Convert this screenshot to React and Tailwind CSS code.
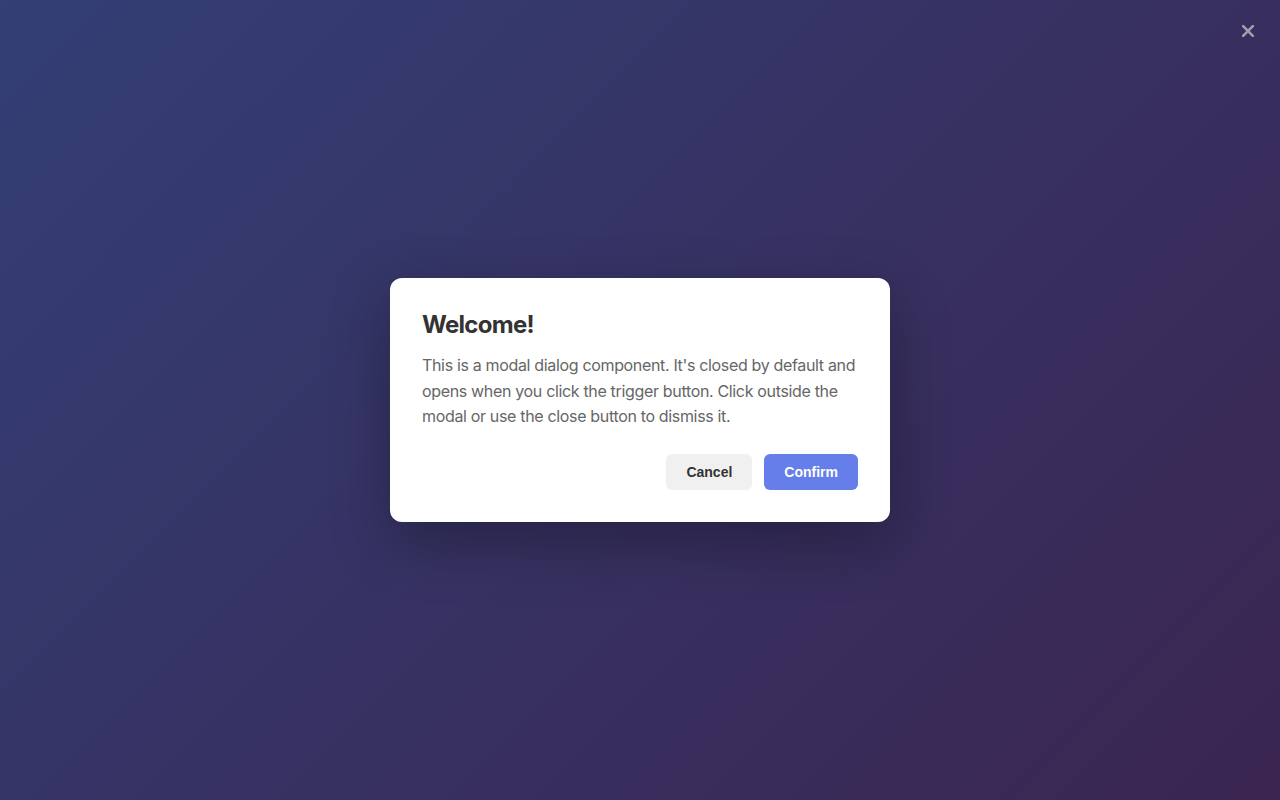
import React, { useState } from 'react';

const Modal = ({ onClose }) => {
  return (
    <div className="w-[500px] rounded-xl bg-white p-8 shadow-[0_20px_60px_rgba(0,0,0,0.3)]">
      <h2 className="mb-[14px] text-2xl leading-[29px] font-bold tracking-[-0.03em] text-[#333]">Welcome!</h2>
      <p className="mb-6 text-base leading-[1.6] tracking-[-0.021em] text-[#666]">
        This is a modal dialog component. It's closed by default and opens when you click the trigger
        button. Click outside the modal or use the close button to dismiss it.
      </p>
      <div className="flex justify-end gap-3">
        <button
          onClick={onClose}
          className="rounded-md bg-[#f0f0f0] px-5 py-[10px] text-sm leading-4 font-bold text-[#333] [font-family:'Liberation_Sans',Arial,sans-serif]"
        >
          Cancel
        </button>
        <button
          onClick={onClose}
          className="rounded-md bg-[#667eea] px-5 py-[10px] text-sm leading-4 font-bold text-white [font-family:'Liberation_Sans',Arial,sans-serif]"
        >
          Confirm
        </button>
      </div>
    </div>
  );
};

const App = () => {
  const [open, setOpen] = useState(true);

  return (
    <div className="relative min-h-screen bg-[linear-gradient(135deg,#667eea_0%,#764ba2_100%)] [font-family:Inter,'Noto_Sans',sans-serif]">
      <div className="flex min-h-screen items-center justify-center bg-black/50">
        {open ? (
          <Modal onClose={() => setOpen(false)} />
        ) : (
          <button
            onClick={() => setOpen(true)}
            className="rounded-md bg-white px-5 py-3 font-semibold text-[#667eea]"
          >
            Open Modal
          </button>
        )}
      </div>
      {open && (
        <button
          onClick={() => setOpen(false)}
          className="absolute top-[19px] right-[20px] flex h-6 w-6 items-center justify-center text-[#a0a0aa]"
          aria-label="Close"
        >
          <svg width="12" height="12" viewBox="0 0 12 12" fill="none">
            <path d="M1.2 1.2 L10.8 10.8 M10.8 1.2 L1.2 10.8" stroke="currentColor" strokeWidth="2.6" strokeLinecap="square" />
          </svg>
        </button>
      )}
    </div>
  );
};

export default App;
